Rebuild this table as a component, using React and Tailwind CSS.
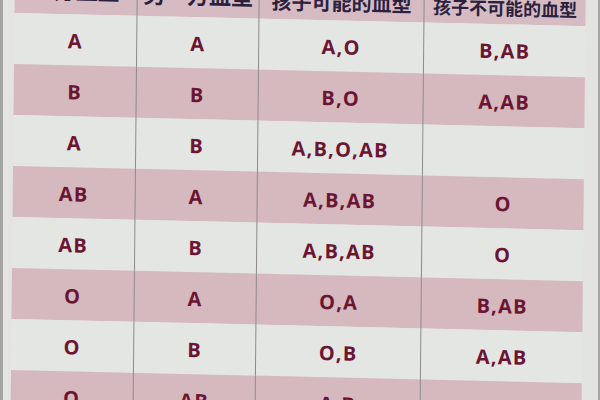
import React from 'react';

const header = [
    { text: '一方血型', cls: 'text-[22px] pb-[7px]' },
    { text: '另一方血型', cls: 'text-[22px] pb-[5px]' },
    { text: '孩子可能的血型', cls: 'text-[20px] pb-[2px]' },
    { text: '孩子不可能的血型', cls: 'text-[18px] pb-[2px]' },
];

const rows = [
    ['A', 'A', 'A,O', 'B,AB'],
    ['B', 'B', 'B,O', 'A,AB'],
    ['A', 'B', 'A,B,O,AB', ''],
    ['AB', 'A', 'A,B,AB', 'O'],
    ['AB', 'B', 'A,B,AB', 'O'],
    ['O', 'A', 'O,A', 'B,AB'],
    ['O', 'B', 'O,B', 'A,AB'],
    ['O', 'AB', 'A,B', 'O,AB'],
];

const cols = 'grid grid-cols-[123px_122px_165px_161px]';

const App = () => {
    return (
        <div
            className="w-[600px] h-[400px] overflow-hidden bg-[#e3e4e1] border-l-[3px] border-r-2 border-[#a4a4a2]"
            style={{ fontFamily: "'Open Sans', 'Noto Sans CJK SC', sans-serif" }}
        >
            {/* ảnh chụp nghiêng: xoay nhẹ + skew */}
            <div className="ml-[12px] mt-[-37px] w-[571px] origin-top-left rotate-[0.57deg] skew-y-[0.75deg]">
                <div className={`${cols} h-[50px] bg-[#d6bcc2]`}>
                    {header.map((h, i) => (
                        <div
                            key={i}
                            className={`flex items-end justify-center font-bold text-[#2a2140] whitespace-nowrap ${h.cls} ${i < 3 ? 'border-r border-[#8e8a8c]' : ''}`}
                        >
                            {h.text}
                        </div>
                    ))}
                </div>

                {rows.map((row, r) => (
                    <div
                        key={r}
                        className={`${cols} h-[51px] ${r % 2 === 1 ? 'bg-[#d5b9bf]' : 'bg-[#e4e6e3]'}`}
                    >
                        {row.map((cell, c) => (
                            <div
                                key={c}
                                className={`flex items-center justify-center pt-[3px] text-[20px] font-bold tracking-[0.06em] text-[#6c1533] ${c < 3 ? 'border-r border-[#8e8a8c]' : ''}`}
                            >
                                {cell}
                            </div>
                        ))}
                    </div>
                ))}
            </div>
        </div>
    );
};

export default App;
